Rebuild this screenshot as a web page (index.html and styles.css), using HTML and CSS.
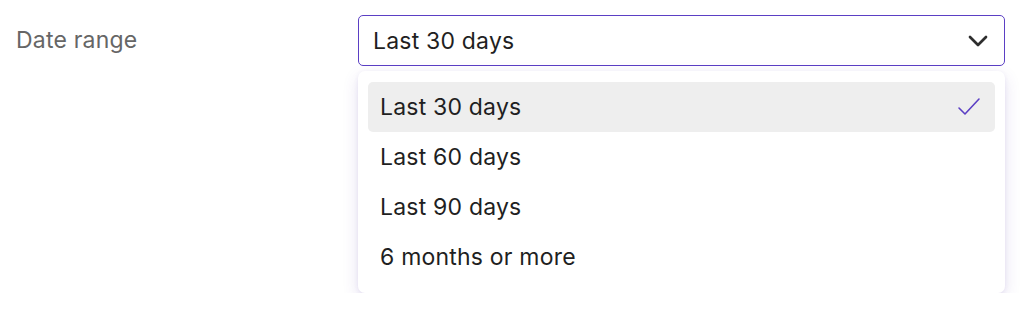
FILE: index.html
```html
<!DOCTYPE html>
<html lang="en">
<head>
<meta charset="utf-8">
<title>Date range</title>
<link rel="stylesheet" href="styles.css">
</head>
<body>
<div class="field">
  <div class="label">Date range</div>
  <div class="select-wrap">
    <div class="select">
      <span class="value">Last 30 days</span>
      <svg class="chevron" width="20" height="12" viewBox="0 0 20 12" aria-hidden="true"><path d="M2 2 L10 10 L18 2" fill="none" stroke="#2e2e2e" stroke-width="2.7" stroke-linecap="round" stroke-linejoin="round"/></svg>
    </div>
    <div class="menu">
      <div class="option selected"><span>Last 30 days</span>
        <svg class="check" width="24" height="20" viewBox="0 0 24 20" aria-hidden="true"><path d="M2 11 L8 17 L22 2" fill="none" stroke="#5b3fc4" stroke-width="1.6" stroke-linecap="round" stroke-linejoin="round"/></svg>
      </div>
      <div class="option"><span>Last 60 days</span></div>
      <div class="option"><span>Last 90 days</span></div>
      <div class="option"><span>6 months or more</span></div>
    </div>
  </div>
</div>
</body>
</html>
```

FILE: styles.css
```css
* { box-sizing: border-box; }
html, body { margin: 0; padding: 0; background: #fff; }
body {
  font-family: Inter, "Noto Sans", sans-serif;
  font-size: 23px;
  letter-spacing: 0.2px;
  color: #1f1f22;
}
.field {
  display: flex;
  align-items: flex-start;
  padding: 15px 29px 0 16px;
}
.label {
  width: 342px;
  flex: none;
  color: #666;
  line-height: 50px;
}
.select-wrap {
  flex: 1;
  display: flex;
  flex-direction: column;
  gap: 5px;
}
.select {
  display: flex;
  align-items: center;
  justify-content: space-between;
  height: 51px;
  padding: 0 16px 0 14px;
  border: 1px solid #5b3fc4;
  border-radius: 5px;
  background: #fff;
}
.chevron { display: block; margin-top: 1px; }
.menu {
  display: flex;
  flex-direction: column;
  padding: 11px 10px;
  background: #fff;
  border-radius: 7px;
  box-shadow: 0 6px 16px rgba(85, 55, 165, 0.15), 0 1px 4px rgba(85, 55, 165, 0.08);
}
.option {
  display: flex;
  align-items: center;
  justify-content: space-between;
  height: 50px;
  padding: 0 14px 0 12px;
  border-radius: 5px;
}
.option.selected { background: #eeeeee; }
.check { display: block; }
```
